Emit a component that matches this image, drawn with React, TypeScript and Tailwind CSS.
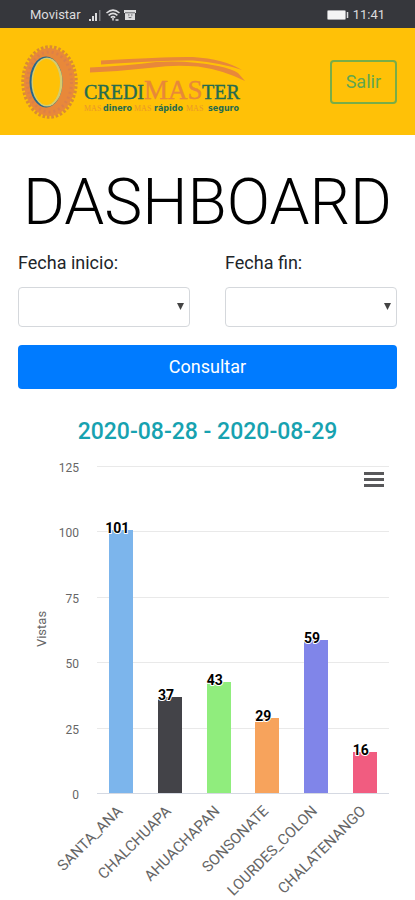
import { useState } from 'react';

interface Branch {
  name: string;
  views: number;
  color: string;
}

const branches: Branch[] = [
  { name: 'SANTA_ANA', views: 101, color: '#7cb5ec' },
  { name: 'CHALCHUAPA', views: 37, color: '#434348' },
  { name: 'AHUACHAPAN', views: 43, color: '#90ed7d' },
  { name: 'SONSONATE', views: 29, color: '#f7a35c' },
  { name: 'LOURDES_COLON', views: 59, color: '#8085e9' },
  { name: 'CHALATENANGO', views: 16, color: '#f15c80' },
];

const ticks = [0, 25, 50, 75, 100, 125];

// plot area inside the chart's viewBox
const plot = { left: 97, right: 389, top: 11, bottom: 338 };

const yFor = (value: number) =>
  Math.round(plot.bottom - (value / 125) * (plot.bottom - plot.top));

function StatusBar() {
  return (
    <div className="flex h-7 items-center justify-between bg-[#36373c] px-[30px] pt-0.5 text-[13px] leading-4 text-[#dcdcde]">
      <div className="flex items-center gap-2">
        <span>Movistar</span>
        <div className="flex items-center gap-1">
          <svg className="h-3 w-[13px]" viewBox="0 0 13 12" fill="#dcdcde">
            <rect x="0" y="10" width="2" height="2" />
            <rect x="3" y="7" width="2" height="5" />
            <rect x="6" y="4" width="2" height="8" />
            <rect x="10" y="1" width="1.5" height="11" fill="#77787c" />
          </svg>
          <svg className="h-3 w-[14px]" viewBox="0 0 14 12" fill="none" stroke="#dcdcde" strokeWidth="1.5">
            <path d="M0.5 4 Q7 -1.8 13.5 4" />
            <path d="M2.6 6.4 Q7 2.4 11.4 6.4" />
            <path d="M4.8 8.6 Q7 6.6 9.2 8.6" />
            <path d="M7 9v2.5M9.5 11h3" />
          </svg>
          <svg className="h-3 w-3" viewBox="0 0 12 12">
            <path d="M0 1h12v3h-1v7H1V4H0z" fill="#dcdcde" />
            <path d="M1 3.8h10M4 6h1.5M7 6h1.5M4.5 8.2Q6 9.4 7.5 8.2" stroke="#55565a" strokeWidth="0.9" fill="none" />
          </svg>
        </div>
      </div>
      <div className="flex items-center gap-1">
        <svg className="h-[10px] w-[22px]" viewBox="0 0 22 10">
          <rect x="0.5" y="0.5" width="18" height="9" rx="1" fill="#f4f4f4" stroke="#a6a6a9" />
          <path d="M20.5 2v6" stroke="#dcdcde" strokeWidth="1.5" />
        </svg>
        <span>11:41</span>
      </div>
    </div>
  );
}

function Logo() {
  return (
    <svg className="h-[78px] w-[228px]" viewBox="0 0 228 78" role="img" aria-label="CrediMaster">
      <ellipse cx="31.5" cy="39" rx="26.5" ry="35" fill="none" stroke="#d98b35" strokeWidth="3.5" strokeDasharray="2.6 1.8" />
      <ellipse cx="31.5" cy="39" rx="25.5" ry="34" fill="#e8883a" />
      <ellipse cx="31.5" cy="39" rx="22" ry="30" fill="none" stroke="#dd8048" strokeWidth="3" strokeDasharray="2 3" />
      <ellipse cx="28" cy="39" rx="16.5" ry="25.5" fill="#27658a" />
      <ellipse cx="29" cy="39" rx="15.5" ry="24.5" fill="#d5cc6d" />
      <ellipse cx="28.5" cy="39" rx="13.5" ry="23" fill="#ffc107" />
      <path d="M83 17.500 Q150 13.500 175 14 Q206 16 224 27 Q204 20 175 17.500 Q150 17 83 21.500z" fill="#e8883a" />
      <path d="M72 24.500 Q110 22.500 138 19 Q170 17 200 23 Q214 26 220 30 L227 38 Q205 27 180 23.500 Q155 21.500 136 24.500 Q105 28 72 29.500z" fill="#e8883a" />
      <g fontFamily="'Liberation Serif', serif" strokeWidth="0.4">
        <text x="66" y="56" fontSize="20" fill="#256b50" stroke="#256b50">CREDI</text>
        <text x="126" y="56" fontSize="27" fill="#e8883a" stroke="#e8883a">MAS</text>
        <text x="184" y="56" fontSize="20" fill="#256b50" stroke="#256b50">TER</text>
      </g>
      <g fontFamily="'Liberation Serif', serif" fontSize="8" fill="#ea962a">
        <text x="66" y="68">MAS</text>
        <text x="116" y="68">MAS</text>
        <text x="168" y="68">MAS</text>
      </g>
      <g fontFamily="'DejaVu Sans', sans-serif" fontSize="8" fontWeight="bold" fill="#256b50">
        <text x="85" y="68">dinero</text>
        <text x="136" y="68">rápido</text>
        <text x="190" y="68">seguro</text>
      </g>
    </svg>
  );
}

function DateField({ id, label }: { id: string; label: string }) {
  return (
    <div className="flex flex-1 flex-col gap-3">
      <label htmlFor={id} className="text-lg leading-6">{label}</label>
      <div className="relative">
        <select id={id} className="h-10 w-full appearance-none rounded border border-[#d5d8dc] bg-white px-3">
          <option value=""></option>
        </select>
        <svg className="pointer-events-none absolute top-4 right-1.5 h-[7px] w-[7px]" viewBox="0 0 7 7">
          <path d="M0 0h7L3.500 7z" fill="#444" />
        </svg>
      </div>
    </div>
  );
}

function ViewsChart() {
  const step = (plot.right - plot.left) / branches.length;

  return (
    <svg className="block w-full" viewBox="0 0 415 444" fill="#666">
      {ticks.map((tick) => (
        <g key={tick}>
          <line
            x1={plot.left}
            x2={plot.right}
            y1={yFor(tick) - 0.5}
            y2={yFor(tick) - 0.5}
            stroke={tick === 0 ? '#d5d9e2' : '#e9e9e9'}
          />
          <text x="79" y={yFor(tick) + 5} fontSize="12" textAnchor="end">{tick}</text>
        </g>
      ))}
      <text transform="translate(46 173) rotate(-90)" fontSize="13" textAnchor="middle">Vistas</text>
      {branches.map((branch, i) => {
        const center = plot.left + step * (i + 0.5);
        const top = yFor(branch.views);
        return (
          <g key={branch.name}>
            <rect x={Math.round(center - 12)} y={top} width="24" height={plot.bottom - top - 1} fill={branch.color} />
            <text
              x={center - 4}
              y={top + 3}
              fontSize="14"
              fontWeight="bold"
              textAnchor="middle"
              fill="#000"
              stroke="#fff"
              strokeWidth="2"
              strokeLinejoin="round"
              paintOrder="stroke"
            >
              {branch.views}
            </text>
            <text transform={`translate(${center + 2} 356) rotate(-45)`} fontSize="15" textAnchor="end">
              {branch.name}
            </text>
          </g>
        );
      })}
    </svg>
  );
}

export default function App() {
  const [menuOpen, setMenuOpen] = useState(false);

  return (
    <div className="min-h-screen bg-white font-[Roboto,sans-serif] text-[#212529]">
      <StatusBar />
      <header className="flex h-[107px] items-center justify-between bg-[#ffc107] px-[18px]">
        <Logo />
        <button type="button" className="h-11 rounded border-2 border-[#78ad48] px-[14px] text-lg text-[#62a650]">
          Salir
        </button>
      </header>

      <main>
        <h1 className="pt-[30px] text-center text-[64px] leading-[76px] font-light text-black">DASHBOARD</h1>
        <form className="flex flex-col gap-[18px] px-[18px] pt-[10px]" onSubmit={(e) => e.preventDefault()}>
          <div className="flex gap-[35px]">
            <DateField id="fecha-inicio" label="Fecha inicio:" />
            <DateField id="fecha-fin" label="Fecha fin:" />
          </div>
          <button type="submit" className="h-11 w-full rounded bg-[#007bff] text-lg text-white">
            Consultar
          </button>
        </form>

        <section className="pt-[29px]">
          <h2 className="text-center text-[23px] leading-7 font-medium text-[#17a2b0]">2020-08-28 - 2020-08-29</h2>
          <div className="relative pt-[10px]">
            <ViewsChart />
            <button
              type="button"
              aria-label="Chart menu"
              aria-expanded={menuOpen}
              onClick={() => setMenuOpen(!menuOpen)}
              className="absolute top-[22px] right-[27px] p-1"
            >
              <svg className="h-4 w-5" viewBox="0 0 20 16" stroke="#58585a" strokeWidth="3">
                <path d="M0 1.500h20M0 7.500h20M0 13.500h20" />
              </svg>
            </button>
          </div>
        </section>
      </main>
    </div>
  );
}
